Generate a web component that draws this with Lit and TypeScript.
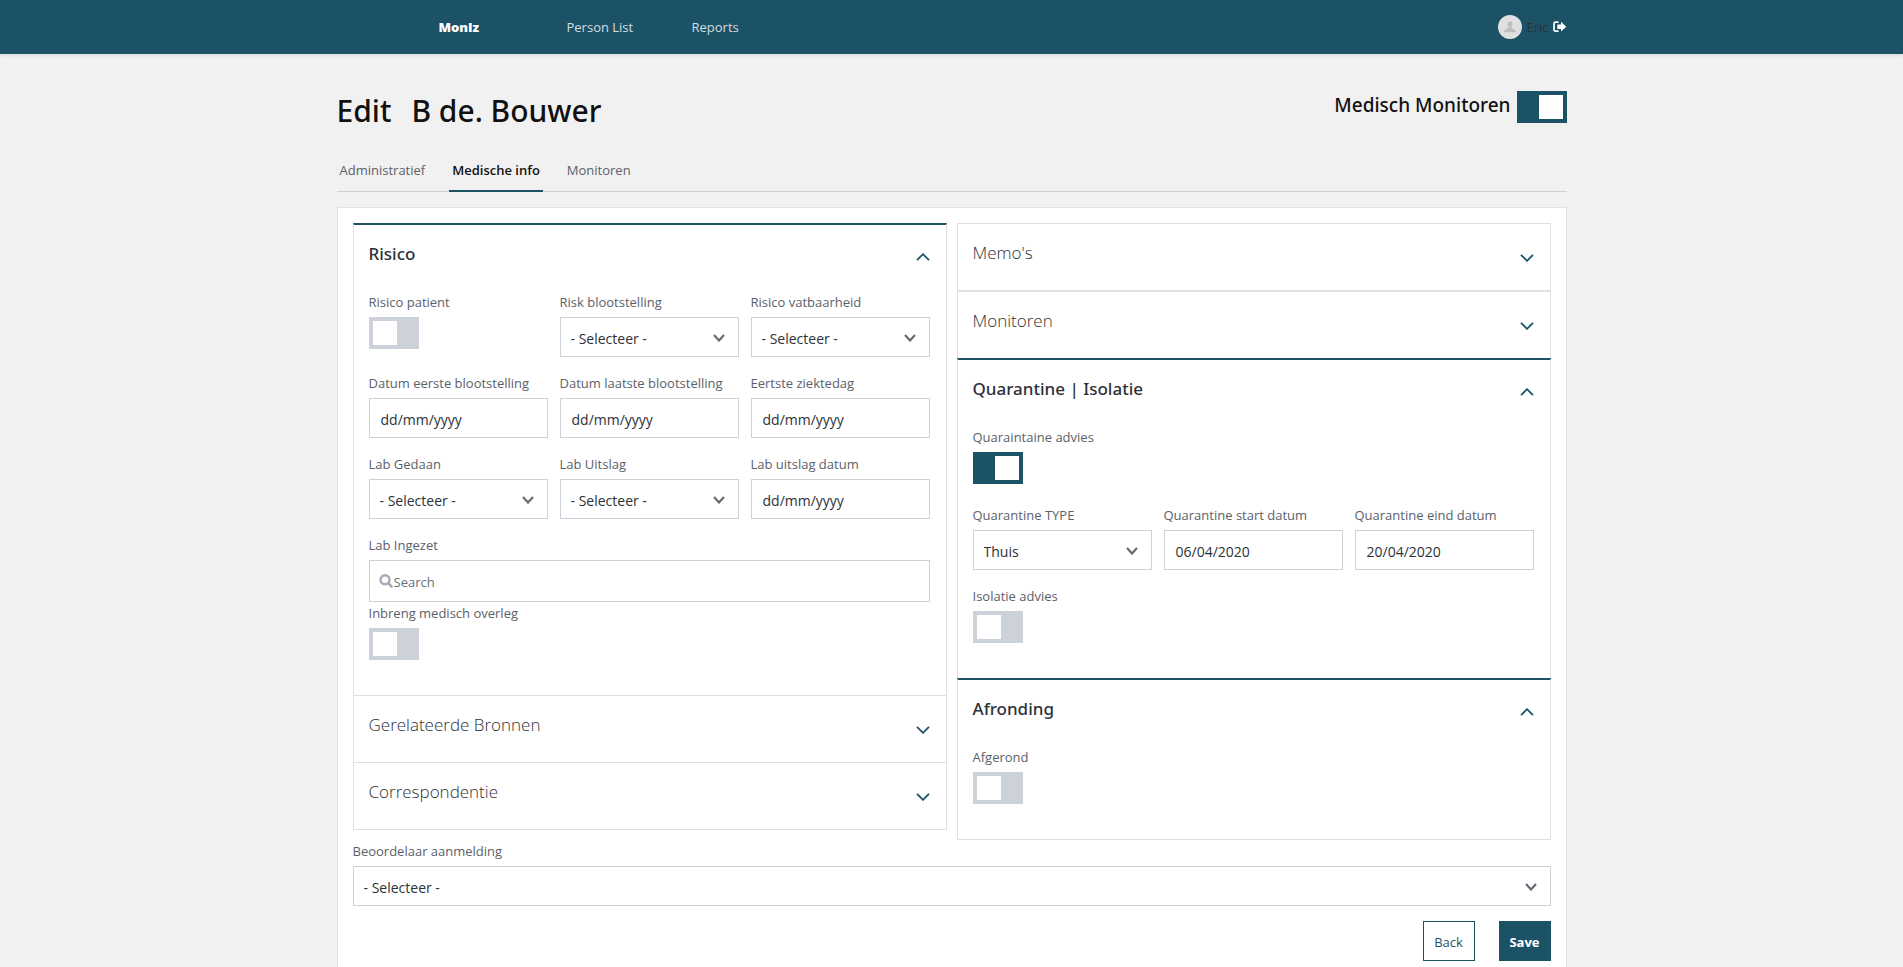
import { LitElement, html, css, nothing } from "lit";
import { customElement, property } from "lit/decorators.js";
import { classMap } from "lit/directives/class-map.js";

type Field =
  | { kind: "switch"; id: string; label: string; on?: boolean }
  | { kind: "select"; id: string; label: string; options: string[] }
  | { kind: "date"; id: string; label: string; value?: string }
  | { kind: "search"; id: string; label: string };

interface Section {
  title: string;
  rows?: Field[][];
}

const CHOOSE = "- Selecteer -";

const LEFT: Section[] = [
  {
    title: "Risico",
    rows: [
      [
        { kind: "switch", id: "risk-patient", label: "Risico patient" },
        { kind: "select", id: "risk-exposure", label: "Risk blootstelling", options: [CHOOSE] },
        { kind: "select", id: "risk-susceptible", label: "Risico vatbaarheid", options: [CHOOSE] },
      ],
      [
        { kind: "date", id: "first-exposure", label: "Datum eerste blootstelling" },
        { kind: "date", id: "last-exposure", label: "Datum laatste blootstelling" },
        { kind: "date", id: "first-ill", label: "Eertste ziektedag" },
      ],
      [
        { kind: "select", id: "lab-done", label: "Lab Gedaan", options: [CHOOSE] },
        { kind: "select", id: "lab-result", label: "Lab Uitslag", options: [CHOOSE] },
        { kind: "date", id: "lab-date", label: "Lab uitslag datum" },
      ],
      [{ kind: "search", id: "lab-used", label: "Lab Ingezet" }],
      [{ kind: "switch", id: "consult", label: "Inbreng medisch overleg" }],
    ],
  },
  { title: "Gerelateerde Bronnen" },
  { title: "Correspondentie" },
];

const RIGHT: Section[] = [
  { title: "Memo's" },
  { title: "Monitoren" },
  {
    title: "Quarantine | Isolatie",
    rows: [
      [{ kind: "switch", id: "quarantine", label: "Quaraintaine advies", on: true }],
      [
        { kind: "select", id: "quarantine-type", label: "Quarantine TYPE", options: ["Thuis"] },
        { kind: "date", id: "quarantine-start", label: "Quarantine start datum", value: "06/04/2020" },
        { kind: "date", id: "quarantine-end", label: "Quarantine eind datum", value: "20/04/2020" },
      ],
      [{ kind: "switch", id: "isolation", label: "Isolatie advies" }],
    ],
  },
  {
    title: "Afronding",
    rows: [[{ kind: "switch", id: "finished", label: "Afgerond" }]],
  },
];

const controls = css`
  * {
    box-sizing: border-box;
  }
  .switch {
    appearance: none;
    display: block;
    flex: none;
    width: 50px;
    height: 32px;
    margin: 0;
    padding: 4px;
    background: #cdd2da;
    cursor: pointer;
  }
  .switch::before {
    content: "";
    display: block;
    width: 24px;
    height: 24px;
    background: #fff;
  }
  .switch:checked {
    background: #1c5266;
  }
  .switch:checked::before {
    margin-left: auto;
  }
`;

@customElement("form-field")
class FormField extends LitElement {
  @property({ attribute: false }) field!: Field;

  static styles = [
    controls,
    css`
      :host {
        display: block;
        min-width: 0;
      }
      .label {
        display: block;
        margin-bottom: 4px;
        line-height: 22px;
        color: #5b616b;
        white-space: nowrap;
      }
      .switch {
        margin-bottom: 5px;
      }
      .select,
      .text,
      .search {
        width: 100%;
        height: 40px;
        border: 1px solid #cdd1d9;
        border-radius: 0;
        background: #fff;
        color: #2d3138;
        font: inherit;
      }
      .select,
      .text {
        font-size: 14px;
      }
      .text {
        display: block;
        padding: 2px 11px 0;
      }
      .text::placeholder {
        color: #2d3138;
        opacity: 1;
      }
      .pick {
        display: grid;
        align-items: center;
      }
      .select {
        appearance: none;
        grid-area: 1 / 1;
        padding: 2px 30px 0 10px;
      }
      .arrow {
        grid-area: 1 / 1;
        justify-self: end;
        margin: 2px 14px 0 0;
        pointer-events: none;
      }
      .search {
        display: flex;
        align-items: center;
        height: 42px;
        padding-left: 9px;
      }
      .query {
        flex: 1;
        min-width: 0;
        padding: 2px 1px 0;
        border: 0;
        outline: 0;
        background: none;
        color: inherit;
        font: inherit;
      }
      .query::placeholder {
        color: #6a7079;
        opacity: 1;
      }
    `,
  ];

  private control() {
    const f = this.field;
    switch (f.kind) {
      case "switch":
        return html`<input class="switch" type="checkbox" role="switch" id=${f.id} ?checked=${f.on} />`;
      case "select":
        return html`<div class="pick">
          <select class="select" id=${f.id}>
            ${f.options.map((o) => html`<option>${o}</option>`)}
          </select>
          <svg class="arrow" width="12" height="8" viewBox="0 0 12 8" aria-hidden="true">
            <path d="M1 1 6 6.500 11 1" fill="none" stroke="#656c76" stroke-width="2.200" />
          </svg>
        </div>`;
      case "date":
        return html`<input class="text" type="text" id=${f.id} placeholder="dd/mm/yyyy" .value=${f.value ?? ""} />`;
      case "search":
        return html`<div class="search">
          <svg width="14" height="14" viewBox="0 0 14 14" aria-hidden="true">
            <circle cx="6" cy="5.800" r="4.500" fill="none" stroke="#a4abb5" stroke-width="2.400" />
            <path d="M9.400 9.200 12.600 12.600" stroke="#a4abb5" stroke-width="2.600" stroke-linecap="round" />
          </svg>
          <input class="query" type="text" id=${f.id} placeholder="Search" />
        </div>`;
    }
  }

  render() {
    return html`<label class="label" for=${this.field.id}>${this.field.label}</label>${this.control()}`;
  }
}

@customElement("section-stack")
class SectionStack extends LitElement {
  @property({ attribute: false }) sections: Section[] = [];
  @property({ type: Boolean }) divided = false;

  static styles = css`
    * {
      box-sizing: border-box;
    }
    :host {
      display: block;
      min-width: 0;
    }
    .item {
      border: 1px solid #dee0e5;
      border-bottom-width: 0;
    }
    .item:last-child {
      border-bottom-width: 1px;
    }
    .divided .item + .item {
      border-top-width: 2px;
    }
    .item.open {
      border-top: 2px solid #1c5266;
    }
    .head {
      display: flex;
      align-items: center;
      justify-content: space-between;
      width: 100%;
      height: 66px;
      padding: 0 16px 0 15px;
      border: 0;
      background: none;
      color: #2d3138;
      font: inherit;
      text-align: left;
      cursor: pointer;
    }
    .title {
      align-self: flex-start;
      padding-top: 14px;
      font-size: 17px;
      font-weight: 300;
      line-height: 30px;
    }
    .open .title {
      font-family: "Noto Sans", "Open Sans", sans-serif;
      font-weight: 500;
    }
    .chevron {
      margin-top: 2px;
    }
    .open .chevron {
      transform: scaleY(-1);
      margin: 0 0 2px;
    }
    .body {
      padding: 0 16px 30px 15px;
    }
    .row {
      display: grid;
      grid-template-columns: repeat(3, minmax(0, 1fr));
      column-gap: 12px;
      margin-bottom: 15px;
    }
    .row.search {
      grid-template-columns: 1fr;
      margin-bottom: 0;
    }
    .row:last-child {
      margin-bottom: 0;
    }
  `;

  private item(s: Section) {
    const open = !!s.rows;
    return html`<section class=${classMap({ item: true, open })}>
      <button class="head" type="button" aria-expanded=${open ? "true" : "false"}>
        <span class="title">${s.title}</span>
        <svg class="chevron" width="14" height="8" viewBox="0 0 14 8" aria-hidden="true">
          <path d="M1 .800 7 6.800 13 .800" fill="none" stroke="#1c5266" stroke-width="1.800" />
        </svg>
      </button>
      ${s.rows
        ? html`<div class="body">
            ${s.rows.map(
              (r) => html`<div class=${classMap({ row: true, search: r[0].kind === "search" })}>
                ${r.map((f) => html`<form-field .field=${f}></form-field>`)}
              </div>`
            )}
          </div>`
        : nothing}
    </section>`;
  }

  render() {
    return html`<div class=${classMap({ divided: this.divided })}>${this.sections.map((s) => this.item(s))}</div>`;
  }
}

@customElement("app-root")
class AppRoot extends LitElement {
  static styles = [
    controls,
    css`
      :host {
        display: block;
        min-height: 100vh;
        background: #f1f1f1;
        color: #111;
        font-family: "Open Sans", "Noto Sans", sans-serif;
        font-size: 13px;
      }
      .bar {
        height: 54px;
        background: #1c5266;
        box-shadow: 0 1px 5px rgba(0, 0, 0, 0.12);
      }
      .wrap {
        width: 100%;
        max-width: 1230px;
        margin: 0 auto;
      }
      .nav {
        display: flex;
        align-items: center;
        height: 100%;
        padding-left: 102px;
      }
      .brand,
      .link {
        color: #d3dee2;
        text-decoration: none;
      }
      .brand {
        width: 128px;
        color: #fff;
        font-weight: 800;
      }
      .link {
        width: 125px;
      }
      .user {
        display: flex;
        align-items: center;
        gap: 4px;
        margin-left: auto;
        color: #2d3138;
      }
      .logout {
        display: flex;
      }
      .top {
        display: flex;
        justify-content: space-between;
        align-items: flex-start;
        padding-top: 37px;
      }
      .name {
        display: flex;
        gap: 20px;
        margin: 0;
        font-family: "Noto Sans", "Open Sans", sans-serif;
        font-size: 30px;
        font-weight: 500;
        line-height: 40px;
      }
      .monitor {
        display: flex;
        align-items: flex-start;
        gap: 6px;
        font-family: "Noto Sans", "Open Sans", sans-serif;
        font-size: 19px;
        font-weight: 500;
        line-height: 28px;
      }
      .tabs {
        display: flex;
        gap: 21px;
        margin-top: 16px;
        border-bottom: 1px solid #cdd0d8;
      }
      .tab {
        margin-bottom: -1px;
        padding: 13px 3px 10px;
        border-bottom: 2px solid transparent;
        color: #5b616b;
        line-height: 20px;
        text-decoration: none;
      }
      .tab.active {
        border-color: #1c5266;
        color: #111;
        font-weight: 600;
      }
      .card {
        margin-top: 15px;
        padding: 15px;
        border: 1px solid #dfe1e6;
        background: #fff;
      }
      .columns {
        display: grid;
        grid-template-columns: repeat(2, minmax(0, 1fr));
        align-items: start;
        column-gap: 10px;
      }
      .actions {
        display: flex;
        justify-content: flex-end;
        gap: 24px;
        margin-top: 15px;
      }
      .btn {
        width: 52px;
        height: 40px;
        padding: 2px 0 0;
        border: 1px solid #1c5266;
        background: #fff;
        color: #1c5266;
        font: inherit;
        font-weight: 500;
        cursor: pointer;
      }
      .btn.primary {
        background: #1c5266;
        color: #fff;
        font-weight: 700;
      }
    `,
  ];

  render() {
    return html`
      <header class="bar">
        <nav class="wrap nav">
          <a class="brand" href="#">MonIz</a>
          <a class="link" href="#persons">Person List</a>
          <a class="link" href="#reports">Reports</a>
          <div class="user">
            <svg width="24" height="24" viewBox="0 0 24 24" aria-hidden="true">
              <circle cx="12" cy="12" r="12" fill="#e0e0e0" />
              <path
                d="M12 6.500c1.600 0 2.400 1.100 2.400 2.600 0 1.100-.4 2.100-1 2.700v1.200c.4.600 4.400 1.100 4.600 3.800v.500H6v-.500c.2-2.700 4.200-3.200 4.600-3.800v-1.200c-.6-.6-1-1.600-1-2.700 0-1.500.8-2.600 2.400-2.600Z"
                fill="#bdbdbd"
              />
            </svg>
            <span>Eric</span>
            <a class="logout" href="#logout" aria-label="Uitloggen">
              <svg width="14" height="12" viewBox="0 0 14 12" aria-hidden="true">
                <path d="M5.500 1.200H2.500A1.500 1.500 0 0 0 1 2.700v6a1.500 1.500 0 0 0 1.500 1.500h3" fill="none" stroke="#fff" stroke-width="1.700" />
                <path d="M8 .8 13.300 5.700 8 10.600V8H4.300V3.400H8Z" fill="#fff" />
              </svg>
            </a>
          </div>
        </nav>
      </header>
      <main class="wrap">
        <div class="top">
          <h1 class="name"><span>Edit</span><span>B de. Bouwer</span></h1>
          <div class="monitor">
            <label for="monitor">Medisch Monitoren</label>
            <input class="switch" type="checkbox" role="switch" id="monitor" checked />
          </div>
        </div>
        <nav class="tabs">
          <a class="tab" href="#admin">Administratief</a>
          <a class="tab active" href="#medical" aria-current="page">Medische info</a>
          <a class="tab" href="#monitor-tab">Monitoren</a>
        </nav>
        <form class="card">
          <div class="columns">
            <section-stack .sections=${LEFT}></section-stack>
            <section-stack .sections=${RIGHT} divided></section-stack>
          </div>
          <form-field
            .field=${{ kind: "select", id: "assessor", label: "Beoordelaar aanmelding", options: [CHOOSE] }}
          ></form-field>
          <div class="actions">
            <button class="btn" type="button">Back</button>
            <button class="btn primary" type="button">Save</button>
          </div>
        </form>
      </main>
    `;
  }
}
